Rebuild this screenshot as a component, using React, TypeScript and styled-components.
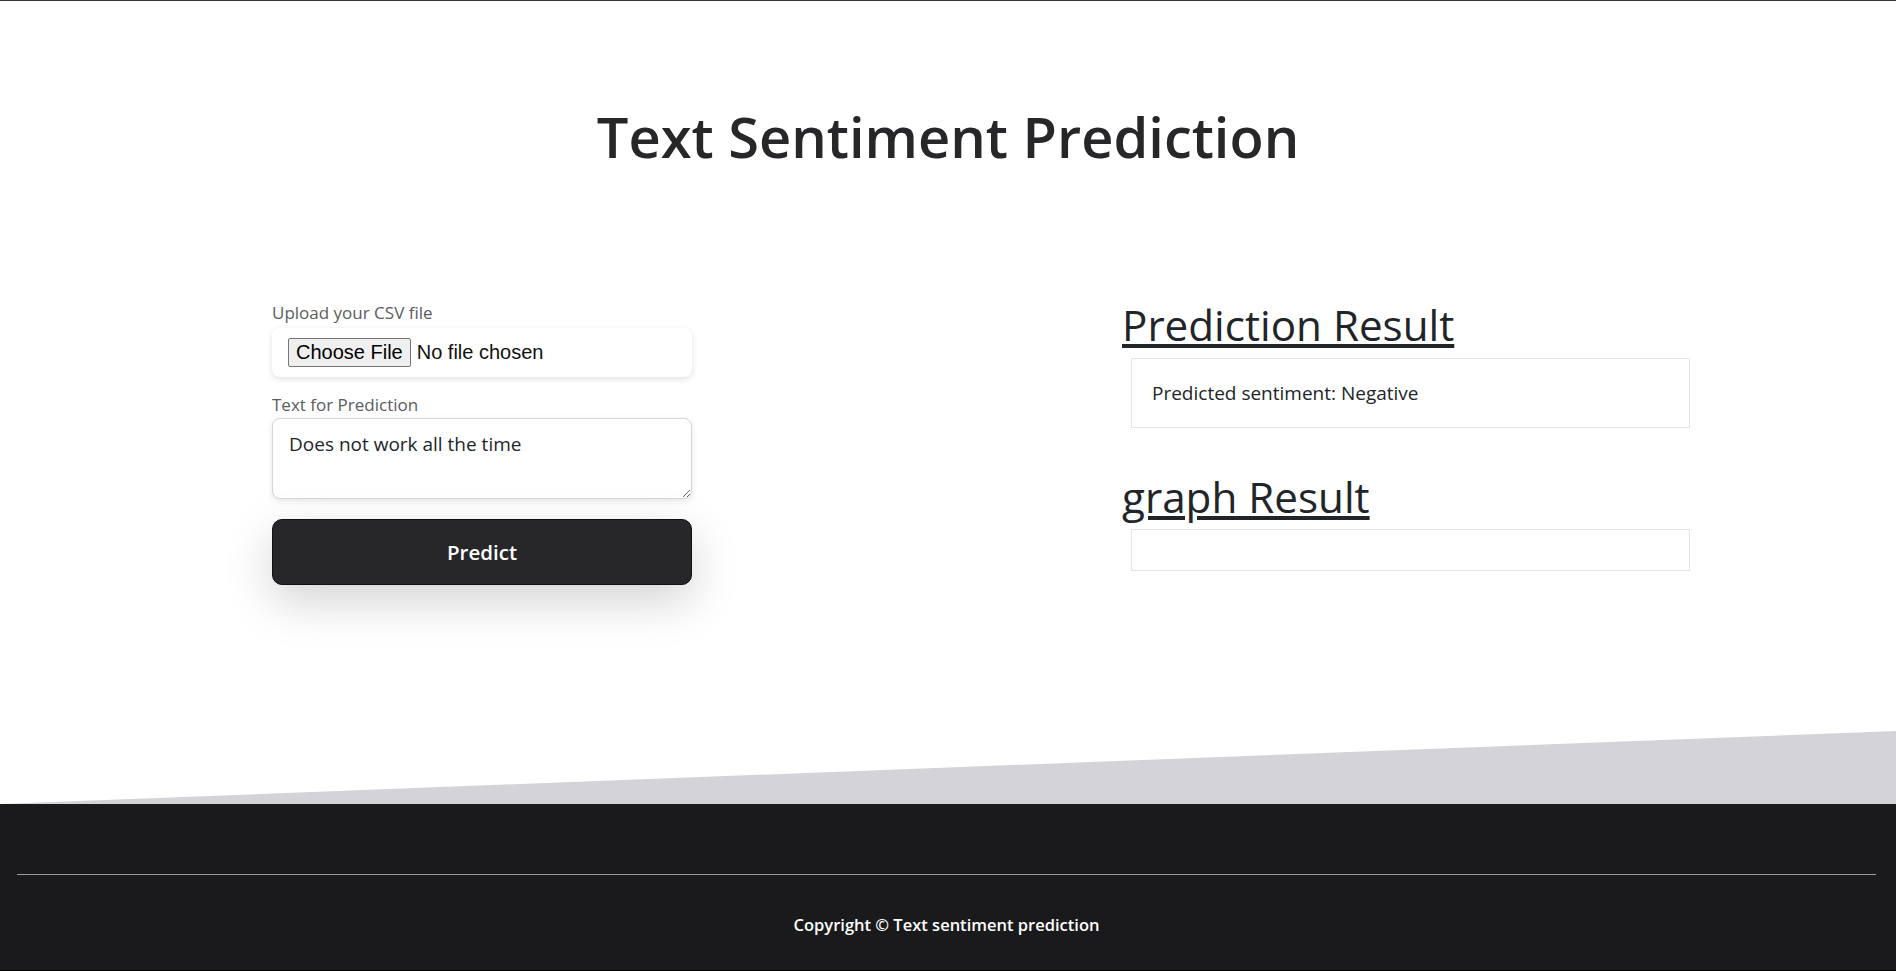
import styled, { createGlobalStyle } from "styled-components";

const GlobalStyle = createGlobalStyle`
  * {
    box-sizing: border-box;
  }
  body {
    margin: 0;
    background: #fff;
    color: #212529;
    font-family: "Open Sans", "Noto Sans", sans-serif;
  }
`;

const App = () => {
  return (
    <Page>
      <GlobalStyle />
      <Header>
        <Title>Text Sentiment Prediction</Title>
      </Header>
      <Main>
        <Form onSubmit={(e) => e.preventDefault()}>
          <Label htmlFor="csv">Upload your CSV file</Label>
          <FileInput id="csv" type="file" accept=".csv" />
          <Label htmlFor="text" $spaced>
            Text for Prediction
          </Label>
          <TextArea id="text" defaultValue="Does not work all the time" />
          <PredictButton type="submit">Predict</PredictButton>
        </Form>
        <Results>
          <ResultTitle>Prediction Result</ResultTitle>
          <ResultBox>Predicted sentiment: Negative</ResultBox>
          <ResultTitle $spaced>graph Result</ResultTitle>
          <ResultBox />
        </Results>
      </Main>
      <Wedge />
      <Footer>
        <Rule />
        <Copyright>Copyright © Text sentiment prediction</Copyright>
      </Footer>
    </Page>
  );
};

export default App;

const Page = styled.div`
  min-height: 100vh;
  display: flex;
  flex-direction: column;
  border-top: 1px solid #333;
`;

const Header = styled.header`
  height: 169px;
  padding-top: 102px;
`;

const Title = styled.h1`
  margin: 0;
  text-align: center;
  font-size: 56px;
  font-weight: 600;
  line-height: 1.2;
  color: #27272a;
`;

const Main = styled.main`
  flex: 1;
  display: grid;
  grid-template-columns: 420px 568px;
  column-gap: 430px;
  align-items: start;
  padding: 129px 0 0 272px;
`;

const Form = styled.form`
  display: flex;
  flex-direction: column;
  padding-top: 3px;
`;

const Label = styled.label<{ $spaced?: boolean }>`
  display: block;
  margin: ${(p) => (p.$spaced ? "17px 0 2px" : "0 0 4px")};
  font-size: 17px;
  line-height: 22px;
  color: #595c60;
`;

const FileInput = styled.input`
  display: block;
  width: 100%;
  height: 49px;
  padding: 10px 16px;
  border: 0;
  border-radius: 8px;
  background: #fff;
  box-shadow: 0 2px 6px rgba(0, 0, 0, 0.12);
  font-family: "Liberation Sans", Arial, sans-serif;
  font-size: 20px;
  color: #111;

  &::file-selector-button {
    margin-right: 6px;
    padding: 2px 7px;
    border: 1px solid #767676;
    border-radius: 2px;
    background: #efefef;
    font: inherit;
    color: #000;
  }
`;

const TextArea = styled.textarea`
  display: block;
  width: 100%;
  height: 81px;
  padding: 11px 16px 8px;
  border: 1px solid #d3d6da;
  border-radius: 8px;
  box-shadow: 0 2px 6px rgba(0, 0, 0, 0.1);
  font-family: "Open Sans", "Noto Sans", sans-serif;
  font-size: 19px;
  line-height: 1.5;
  color: #212529;
  outline: none;
`;

const PredictButton = styled.button`
  margin-top: 20px;
  width: 100%;
  height: 66px;
  border: 1px solid #111;
  border-radius: 10px;
  background: #27272a;
  box-shadow: 0 16px 48px rgba(0, 0, 0, 0.175);
  font-family: "Open Sans", "Noto Sans", sans-serif;
  font-size: 20.5px;
  font-weight: 600;
  color: #fff;
  cursor: pointer;
`;

const Results = styled.section`
  display: flex;
  flex-direction: column;
`;

const ResultTitle = styled.h2<{ $spaced?: boolean }>`
  margin: ${(p) => (p.$spaced ? "43px 0 5px" : "0 0 6px")};
  font-size: 42.2px;
  font-weight: 400;
  line-height: 1.25;
  text-decoration: underline;
  color: #212529;
`;

const ResultBox = styled.div`
  margin-left: 9px;
  min-height: 42px;
  padding: 20px;
  border: 1px solid #e2e4e7;
  font-size: 19px;
  line-height: 28px;
  color: #212529;
`;

const Wedge = styled.div`
  height: 73px;
  background: #d4d4d8;
  clip-path: polygon(0 100%, 100% 0, 100% 100%);
`;

const Footer = styled.footer`
  height: 167px;
  padding: 70px 20px 0 17px;
  background: #1a1a1d;
  border-bottom: 1px solid #000;
`;

const Rule = styled.div`
  height: 1px;
  background: #9b9b9e;
`;

const Copyright = styled.p`
  margin: 37px 0 0;
  text-align: center;
  font-size: 16.5px;
  font-weight: 600;
  line-height: 25px;
  color: #fff;
`;
